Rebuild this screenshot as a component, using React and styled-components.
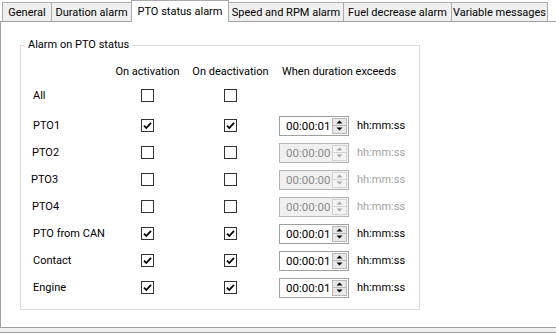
import React from "react";
import styled, { createGlobalStyle } from "styled-components";

const Global = createGlobalStyle`
  html, body { margin: 0; padding: 0; background: #fff; overflow: hidden; }
  body { font-family: Roboto, "Liberation Sans", sans-serif; font-size: 11px; color: #000; }
  * { box-sizing: border-box; }
`;

const Window = styled.div`
  width: 556px;
  height: 334px;
  display: flex;
  flex-direction: column;
  background: #fff;
`;

const TabBar = styled.div`
  display: flex;
  align-items: flex-end;
  height: 21px;
  padding-left: 2px;
  position: relative;
  z-index: 1;
`;

const Tab = styled.div`
  width: ${(p) => p.$w}px;
  height: ${(p) => (p.$active ? 22 : 19)}px;
  margin-left: ${(p) => (p.$first ? 0 : -1)}px;
  margin-bottom: ${(p) => (p.$active ? -1 : 0)}px;
  border: 1px solid #acacac;
  border-bottom: none;
  background: ${(p) => (p.$active ? "#fff" : "#f0f0f0")};
  display: flex;
  align-items: center;
  justify-content: center;
  padding-bottom: ${(p) => (p.$active ? 1 : 0)}px;
  position: relative;
  z-index: ${(p) => (p.$active ? 2 : 1)};
  white-space: nowrap;
  font-size: 11px;
  line-height: 13px;
`;

const Pane = styled.div`
  height: 307px;
  border: 1px solid #a0a0a0;
  border-right: none;
  background: #fff;
`;

const Footer = styled.div`
  height: 5px;
  background: #f0f0f0;
  border-bottom: 1px solid #a0a0a0;
`;

const Group = styled.fieldset`
  margin: 16px 0 0 19px;
  width: 400px;
  border: 1px solid #dcdcdc;
  padding: 9px 0 8px 12px;
  min-width: 0;
`;

const Legend = styled.legend`
  padding: 0 3px;
  margin-left: -8px;
  line-height: 14px;
  font-size: 11px;
`;

const COLS = "77px 75px 91px 1fr";

const HeaderRow = styled.div`
  display: grid;
  grid-template-columns: ${COLS};
  height: 21px;
  align-items: center;
`;

const HeaderCell = styled.div`
  grid-column: ${(p) => p.$col};
  justify-self: ${(p) => (p.$center ? "center" : "start")};
  margin-left: ${(p) => p.$ml || 0}px;
  white-space: nowrap;
`;

const Row = styled.div`
  display: grid;
  grid-template-columns: ${COLS};
  height: 27px;
  margin-top: ${(p) => p.$mt || 0}px;
  align-items: center;
`;

const Label = styled.div`
  margin-left: ${(p) => p.$dx || 0}px;
  white-space: nowrap;
`;

const CheckCell = styled.div`
  display: flex;
  justify-content: center;
`;

const Box = styled.div`
  width: 13px;
  height: 13px;
  border: 1px solid #333;
  background: #fff;
  display: flex;
`;

const TimeCell = styled.div`
  display: flex;
  align-items: center;
  margin-left: 3px;
  gap: 8px;
`;

const Spin = styled.div`
  width: 70px;
  height: 20px;
  display: flex;
  border: 1px solid ${(p) => (p.$disabled ? "#b4b4b4" : "#a0a0a0")};
  background: ${(p) => (p.$disabled ? "#f0f0f0" : "#fff")};
`;

const SpinText = styled.div`
  flex: 1;
  display: flex;
  align-items: center;
  padding-left: 6px;
  color: ${(p) => (p.$disabled ? "#8a8a8a" : "#000")};
  font-size: 11.5px;
`;

const SpinButtons = styled.div`
  width: 15px;
  margin: 1px 1px 1px 0;
  display: flex;
  flex-direction: column;
`;

const SpinBtn = styled.div`
  flex: 1;
  display: flex;
  align-items: center;
  justify-content: center;
  background: ${(p) => (p.$disabled ? "#f4f4f4" : "#e8e8e8")};
  border: 1px solid ${(p) => (p.$disabled ? "#d4d4d4" : "#b8b8b8")};
  border-top-width: ${(p) => (p.$down ? 0 : 1)}px;
`;

const Unit = styled.div`
  color: ${(p) => (p.$disabled ? "#a3a3a3" : "#000")};
  white-space: nowrap;
`;

function Check({ checked }) {
  return (
    <Box>
      {checked && (
        <svg width="11" height="11" viewBox="0 0 11 11">
          <path d="M2 5.6 L4.3 8 L9 2.8" fill="none" stroke="#000" strokeWidth="1.8" />
        </svg>
      )}
    </Box>
  );
}

function Arrow({ down, color }) {
  return (
    <svg width="7" height="4" viewBox="0 0 7 4">
      <path d={down ? "M0.5 0.5 H6.5 L3.5 3.5 Z" : "M0.5 3.5 H6.5 L3.5 0.5 Z"} fill={color} />
    </svg>
  );
}

function TimeSpin({ value, disabled }) {
  const c = disabled ? "#a6a6a6" : "#000";
  return (
    <TimeCell>
      <Spin $disabled={disabled}>
        <SpinText $disabled={disabled}>{value}</SpinText>
        <SpinButtons>
          <SpinBtn $disabled={disabled}>
            <Arrow color={c} />
          </SpinBtn>
          <SpinBtn $disabled={disabled} $down>
            <Arrow down color={c} />
          </SpinBtn>
        </SpinButtons>
      </Spin>
      <Unit $disabled={disabled}>hh:mm:ss</Unit>
    </TimeCell>
  );
}

const tabs = [
  { label: "General", w: 50 },
  { label: "Duration alarm", w: 81 },
  { label: "PTO status alarm", w: 98, active: true },
  { label: "Speed and RPM alarm", w: 116 },
  { label: "Fuel decrease alarm", w: 109 },
  { label: "Variable messages", w: 97 },
];

const rows = [
  { label: "All", a: false, b: false },
  { label: "PTO1", a: true, b: true, time: "00:00:01", mt: 3 },
  { label: "PTO2", dx: -1, a: false, b: false, time: "00:00:00", disabled: true },
  { label: "PTO3", dx: -2, a: false, b: false, time: "00:00:00", disabled: true },
  { label: "PTO4", dx: -1, a: false, b: false, time: "00:00:00", disabled: true },
  { label: "PTO from CAN", a: true, b: true, time: "00:00:01" },
  { label: "Contact", a: true, b: true, time: "00:00:01" },
  { label: "Engine", a: true, b: true, time: "00:00:01" },
];

export default function App() {
  return (
    <>
      <Global />
      <Window>
        <TabBar>
          {tabs.map((t, i) => (
            <Tab key={t.label} $w={t.w} $active={t.active} $first={i === 0}>
              {t.label}
            </Tab>
          ))}
        </TabBar>
        <Pane>
          <Group>
            <Legend>Alarm on PTO status</Legend>
            <HeaderRow>
              <HeaderCell $col={2} $center>On activation</HeaderCell>
              <HeaderCell $col={3} $center>On deactivation</HeaderCell>
              <HeaderCell $col={4} $ml={6}>When duration exceeds</HeaderCell>
            </HeaderRow>
            {rows.map((r) => (
              <Row key={r.label} $mt={r.mt}>
                <Label $dx={r.dx}>{r.label}</Label>
                <CheckCell>
                  <Check checked={r.a} />
                </CheckCell>
                <CheckCell>
                  <Check checked={r.b} />
                </CheckCell>
                {r.time ? <TimeSpin value={r.time} disabled={r.disabled} /> : <div />}
              </Row>
            ))}
          </Group>
        </Pane>
        <Footer />
      </Window>
    </>
  );
}
